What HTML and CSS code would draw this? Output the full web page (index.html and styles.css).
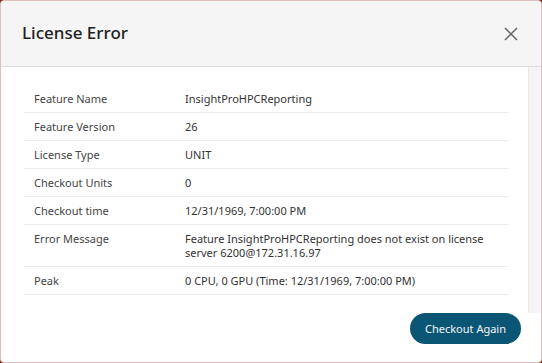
FILE: index.html
```html
<!DOCTYPE html>
<html>
<head>
<meta charset="utf-8">
<link rel="stylesheet" href="styles.css">
</head>
<body>
<div class="dialog">
  <div class="header">
    <h1 class="title">License Error</h1>
    <button class="close" aria-label="Close">
      <svg width="14" height="14" viewBox="0 0 14 14"><path d="M1 1L13 13M13 1L1 13" stroke="#666" stroke-width="1.5" fill="none"/></svg>
    </button>
  </div>
  <div class="main">
    <div class="body">
      <table class="info">
        <tr><td class="label">Feature Name</td><td class="value">InsightProHPCReporting</td></tr>
        <tr><td class="label">Feature Version</td><td class="value">26</td></tr>
        <tr><td class="label">License Type</td><td class="value">UNIT</td></tr>
        <tr><td class="label">Checkout Units</td><td class="value">0</td></tr>
        <tr><td class="label">Checkout time</td><td class="value">12/31/1969, 7:00:00 PM</td></tr>
        <tr><td class="label">Error Message</td><td class="value">Feature InsightProHPCReporting does not exist on license server 6200@172.31.16.97</td></tr>
        <tr><td class="label">Peak</td><td class="value">0 CPU, 0 GPU (Time: 12/31/1969, 7:00:00 PM)</td></tr>
      </table>
    </div>
    <div class="scrollbar"></div>
  </div>
  <div class="footer">
    <button class="primary">Checkout Again</button>
  </div>
</div>
</body>
</html>
```
FILE: styles.css
```css
* { box-sizing: border-box; }
html, body { margin: 0; padding: 0; }
body {
  background: #7d2a14;
  width: 542px;
  height: 363px;
  font-family: "Noto Sans", "Open Sans", sans-serif;
  overflow: hidden;
}
.dialog {
  width: 542px;
  height: 363px;
  background: #fff;
  border: 1px solid #dcc0b9;
  border-radius: 4px;
  display: flex;
  flex-direction: column;
  overflow: hidden;
}
.header {
  height: 66px;
  flex: none;
  background: #f5f5f5;
  border-bottom: 1px solid #dcdcdc;
  display: flex;
  align-items: center;
  justify-content: space-between;
  padding: 0 23px 0 21px;
}
.title {
  margin: 0;
  font-size: 17px;
  font-weight: 500;
  color: #222;
  line-height: 22px;
  padding-bottom: 1px;
}
.close {
  border: 0;
  background: transparent;
  padding: 0;
  width: 14px;
  height: 14px;
  display: flex;
}
.main {
  height: 246px;
  flex: none;
  display: flex;
}
.body {
  flex: 1;
  padding: 18px 20px 17px 23px;
}
.scrollbar {
  width: 13px;
  flex: none;
  background: #f4f4f4;
  border-left: 1px solid #e9e9e9;
}
.info {
  width: 100%;
  border-collapse: collapse;
  font-size: 11px;
  line-height: 14px;
  color: #3a3a3a;
}
.info td {
  padding: 7px 10px 6px;
  border-bottom: 1px solid #ebebeb;
  vertical-align: top;
}
.info .label { width: 151px; color: #444; }
.info .value { color: #333; padding-right: 20px; }
.footer {
  flex: 1;
  display: flex;
  justify-content: flex-end;
  align-items: flex-start;
  padding: 0 20px 0 0;
}
.primary {
  width: 111px;
  height: 31px;
  border: 0;
  border-radius: 16px;
  background: #0c5675;
  color: #f2f6f8;
  font-family: "Noto Sans", "Open Sans", sans-serif;
  font-size: 11px;
  padding: 0;
}
```
